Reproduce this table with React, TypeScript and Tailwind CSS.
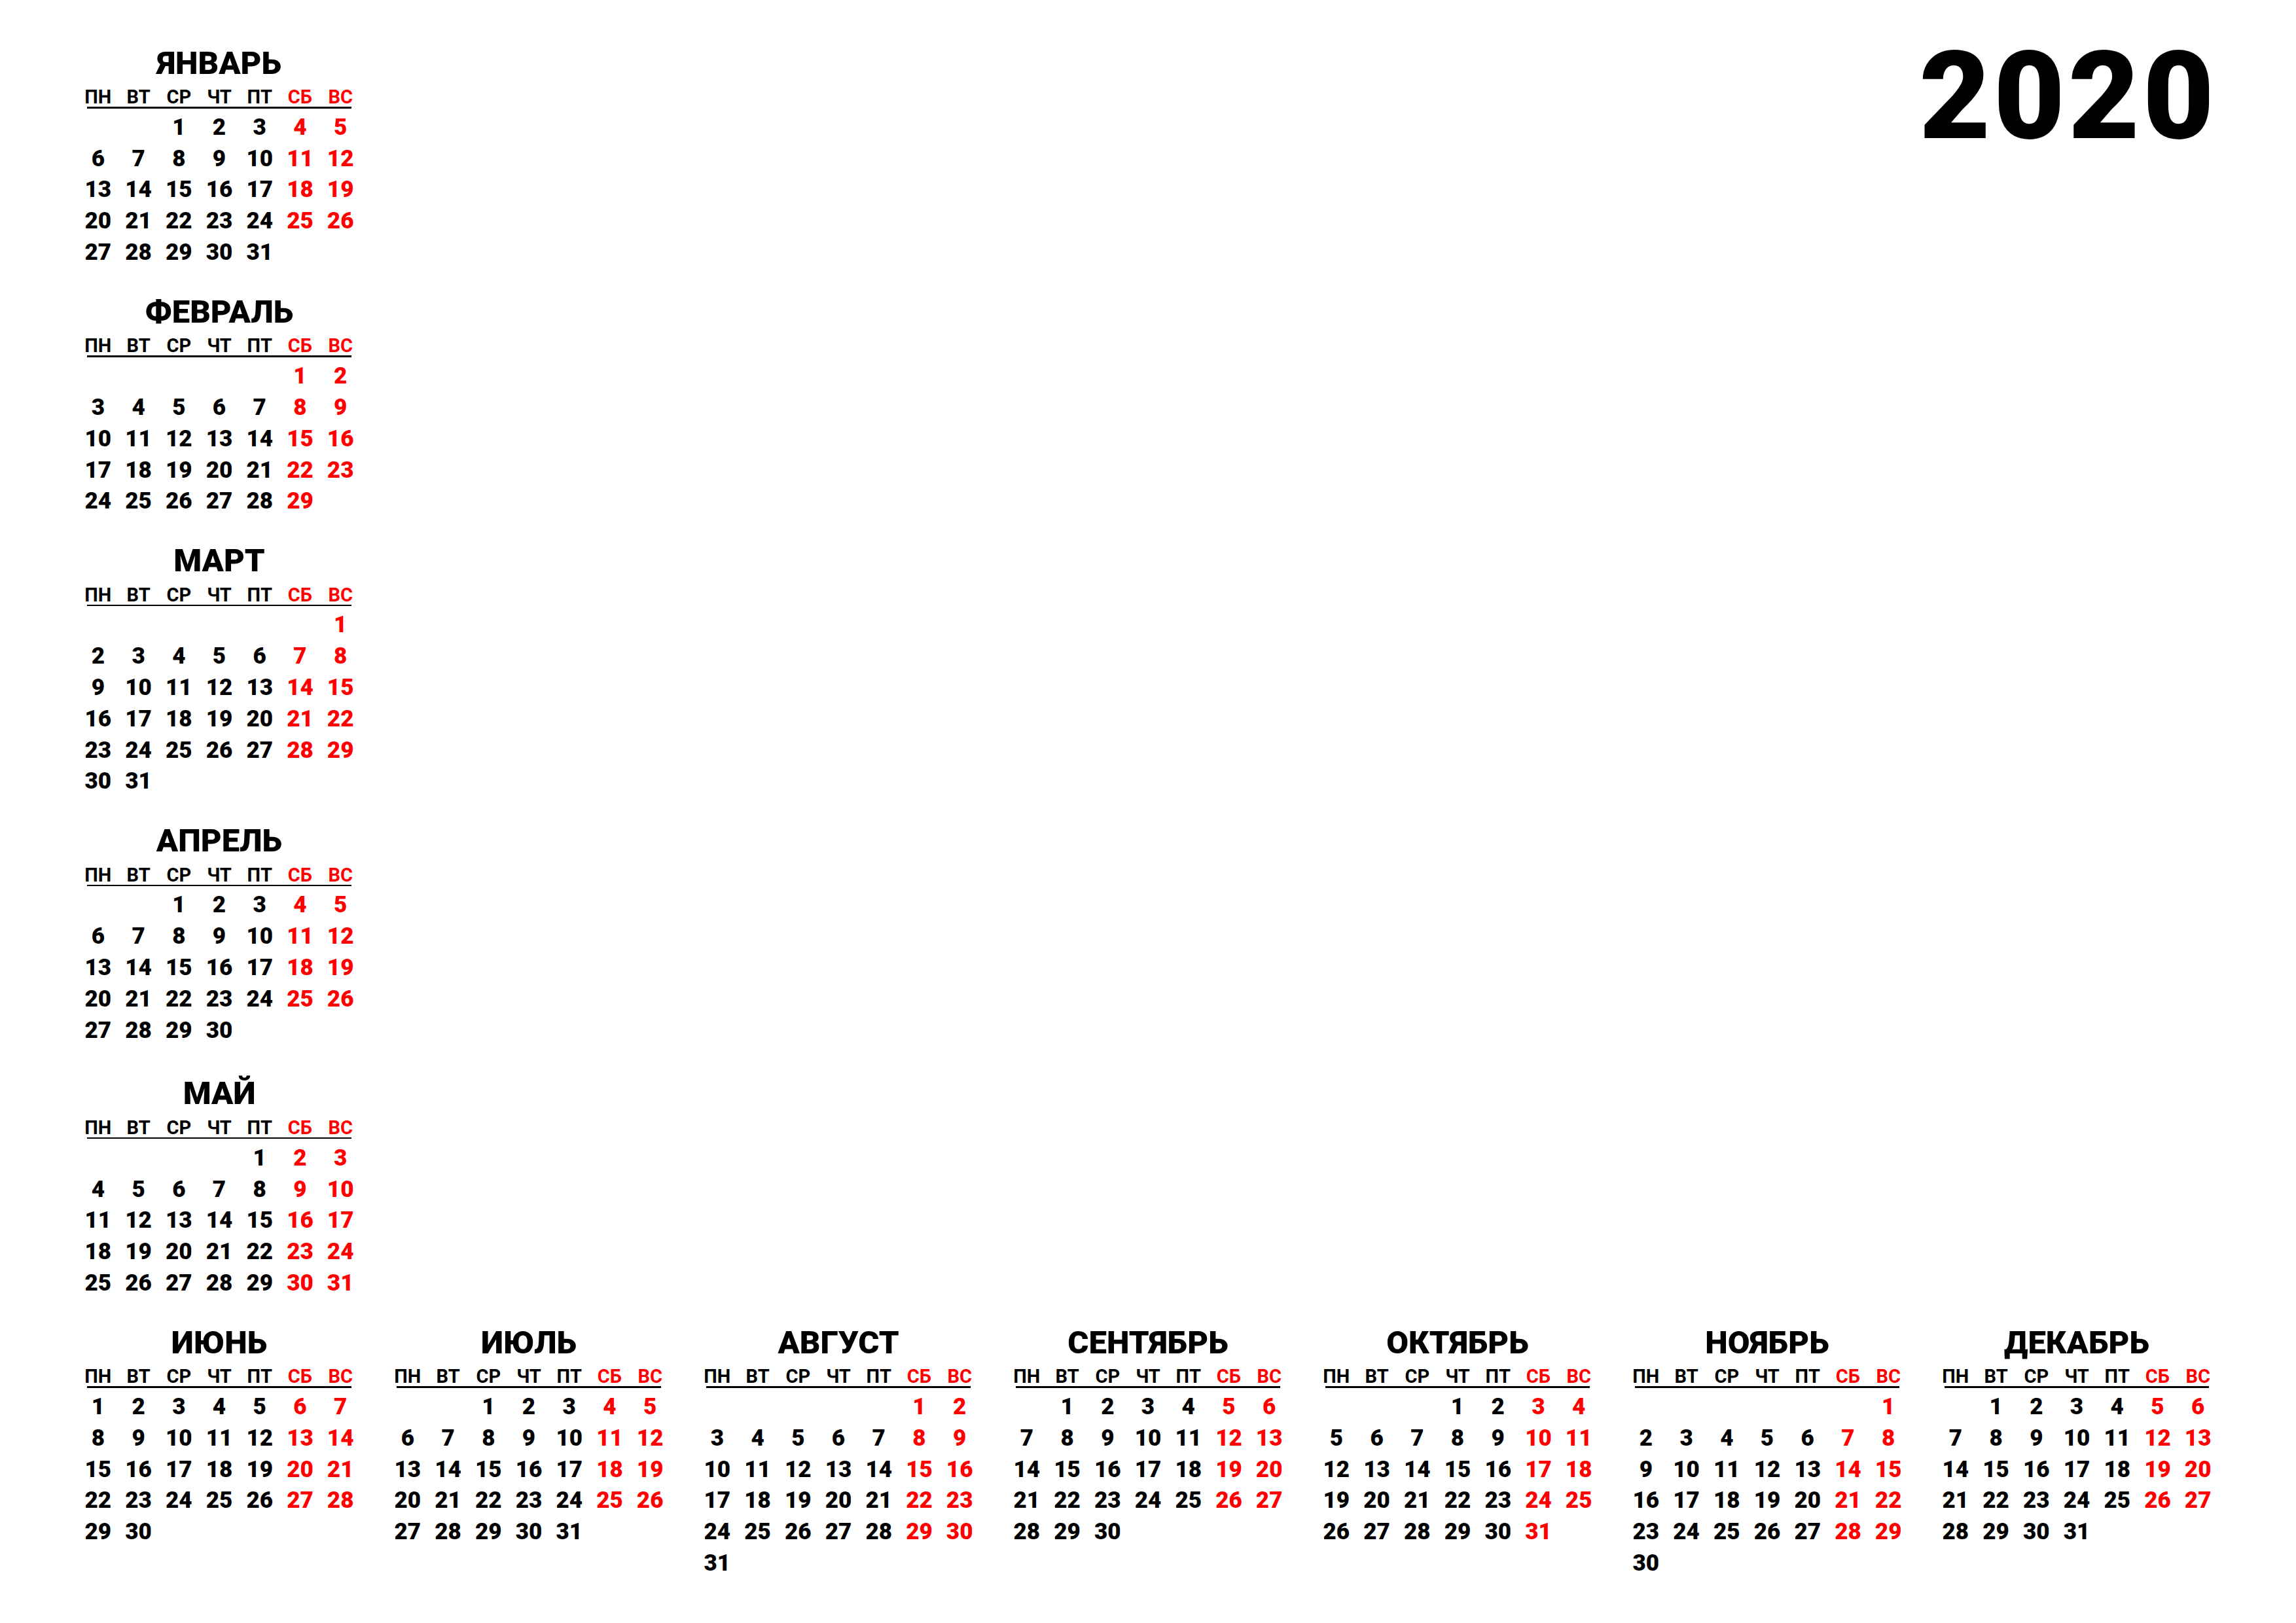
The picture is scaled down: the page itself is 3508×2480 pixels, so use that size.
import React from "react";

const MONTHS = [
  "ЯНВАРЬ",
  "ФЕВРАЛЬ",
  "МАРТ",
  "АПРЕЛЬ",
  "МАЙ",
  "ИЮНЬ",
  "ИЮЛЬ",
  "АВГУСТ",
  "СЕНТЯБРЬ",
  "ОКТЯБРЬ",
  "НОЯБРЬ",
  "ДЕКАБРЬ",
];
const DAYS = ["ПН", "ВТ", "СР", "ЧТ", "ПТ", "СБ", "ВС"];

function cellsFor(m: number): (number | null)[] {
  const first = new Date(2020, m, 1);
  const offset = (first.getDay() + 6) % 7;
  const n = new Date(2020, m + 1, 0).getDate();
  const cells: (number | null)[] = [];
  for (let i = 0; i < offset; i++) cells.push(null);
  for (let d = 1; d <= n; d++) cells.push(d);
  while (cells.length % 7 !== 0) cells.push(null);
  return cells;
}

function Month({ m, extraTop }: { m: number; extraTop?: boolean }) {
  const cells = cellsFor(m);
  return (
    <div className={`w-[432px] flex flex-col shrink-0 ${extraTop ? "mt-[6px]" : ""}`}>
      <div className="h-[49px] text-[49px] leading-[49px] text-center font-black text-black whitespace-nowrap">
        {MONTHS[m]}
      </div>
      <div className="mt-[13.6px] grid grid-cols-7 h-[29px]">
        {DAYS.map((d, i) => (
          <div
            key={d}
            className={`text-center text-[29px] leading-[29px] font-bold ${
              i >= 5 ? "text-[#ff0000]" : "text-black"
            }`}
          >
            {d}
          </div>
        ))}
      </div>
      <div className="mx-[14px] h-[2.4px] bg-black" />
      <div className="mt-[5.3px] grid grid-cols-7">
        {cells.map((d, i) => (
          <div
            key={i}
            className={`h-[47.8px] text-center text-[35px] leading-[47.8px] font-black ${
              i % 7 >= 5 ? "text-[#ff0000]" : "text-black"
            }`}
          >
            {d ?? ""}
          </div>
        ))}
      </div>
    </div>
  );
}

export default function App() {
  return (
    <div className="w-[3508px] h-[2480px] bg-white overflow-hidden font-['Roboto','Liberation_Sans',sans-serif] px-[119px] pt-[71.6px] flex flex-col">
      <div className="flex flex-row justify-between items-start">
        <div className="flex flex-col gap-[42px]">
          <Month m={0} />
          <Month m={1} />
          <Month m={2} />
          <Month m={3} />
          <Month m={4} extraTop />
        </div>
        <div className="-mt-[18.2px] mr-[1px] text-[188px] leading-[188px] font-black tracking-[5px] text-black">
          2020
        </div>
      </div>
      <div className="mt-[42px] flex flex-row justify-between">
        {[5, 6, 7, 8, 9, 10, 11].map((m) => (
          <Month key={m} m={m} />
        ))}
      </div>
    </div>
  );
}
